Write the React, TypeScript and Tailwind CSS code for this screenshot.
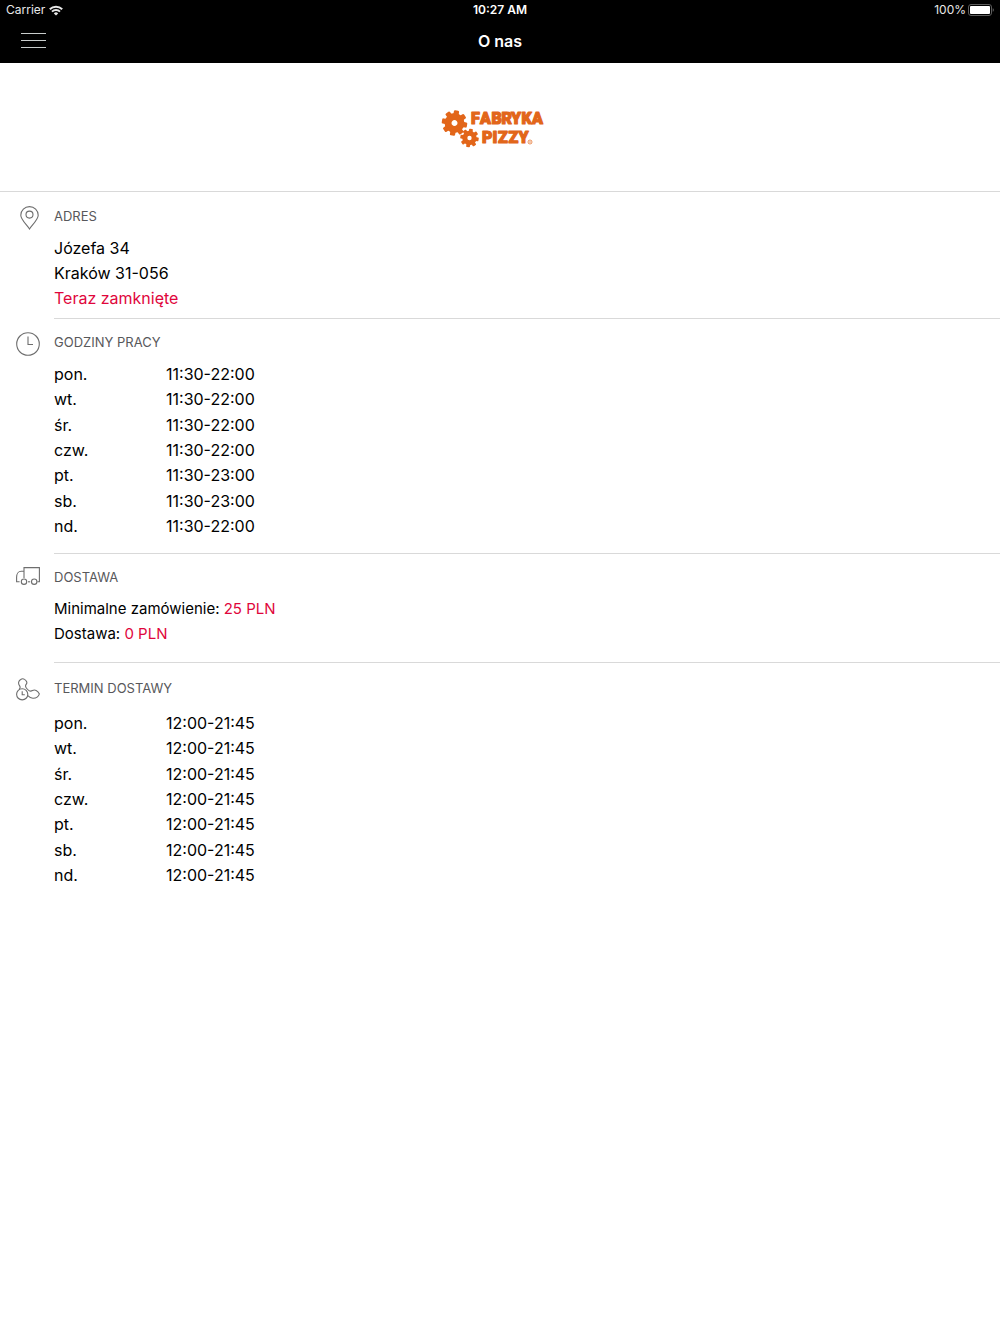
import type { ReactNode } from 'react'

interface DayHours {
  day: string
  hours: string
}

const openingHours: DayHours[] = [
  { day: 'pon.', hours: '11:30-22:00' },
  { day: 'wt.', hours: '11:30-22:00' },
  { day: 'śr.', hours: '11:30-22:00' },
  { day: 'czw.', hours: '11:30-22:00' },
  { day: 'pt.', hours: '11:30-23:00' },
  { day: 'sb.', hours: '11:30-23:00' },
  { day: 'nd.', hours: '11:30-22:00' }
]

const deliveryHours: DayHours[] = [
  { day: 'pon.', hours: '12:00-21:45' },
  { day: 'wt.', hours: '12:00-21:45' },
  { day: 'śr.', hours: '12:00-21:45' },
  { day: 'czw.', hours: '12:00-21:45' },
  { day: 'pt.', hours: '12:00-21:45' },
  { day: 'sb.', hours: '12:00-21:45' },
  { day: 'nd.', hours: '12:00-21:45' }
]

function WifiIcon() {
  return (
    <svg width="14" height="11" viewBox="0 0 14 11" fill="none" stroke="currentColor" strokeWidth="2">
      <path d="M0.8 4.2a8.8 8.8 0 0 1 12.4 0" />
      <path d="M3 6.6a5.7 5.7 0 0 1 8 0" />
      <path d="M7 10.6 4.8 8.4a3.1 3.1 0 0 1 4.4 0Z" fill="currentColor" stroke="none" />
    </svg>
  )
}

function BatteryIcon() {
  return (
    <svg width="26" height="12" viewBox="0 0 26 12" fill="none">
      <rect x="0.5" y="0.5" width="23" height="11" rx="2.5" stroke="#5c5c5c" />
      <rect x="2" y="2" width="20" height="8" rx="1" fill="#fff" />
      <path d="M24.7 4.2v3.6c.9-.4 1.2-1 1.2-1.8s-.3-1.4-1.2-1.8Z" fill="#5c5c5c" />
    </svg>
  )
}

function PinIcon() {
  return (
    <svg width="20" height="24" viewBox="0 0 20 24" fill="none" stroke="currentColor" strokeWidth="1.1">
      <path d="M9.500 23C7.500 19.500 0.800 13.700 0.800 9.200a8.700 8.600 0 0 1 17.400 0C18.200 13.700 11.500 19.500 9.500 23Z" />
      <circle cx="9.500" cy="8.600" r="3.500" />
    </svg>
  )
}

function ClockIcon() {
  return (
    <svg width="24" height="24" viewBox="0 0 24 24" fill="none" stroke="currentColor" strokeWidth="1.1">
      <circle cx="12" cy="12" r="11.300" />
      <path d="M12 4.500v8h5" />
    </svg>
  )
}

function TruckIcon() {
  return (
    <svg width="24" height="18" viewBox="0 0 24 18" fill="none" stroke="currentColor" strokeWidth="1.1">
      <path d="M8 11V0.600h15.400v14.200h-2" />
      <path d="M8 4.300H5.200C2.400 4.300 0.600 7 0.600 10.300v4.500h3" />
      <path d="M12 14.800h2.200" />
      <circle cx="8" cy="14.700" r="2.700" />
      <circle cx="18.200" cy="14.700" r="2.700" />
    </svg>
  )
}

function PhoneClockIcon() {
  return (
    <svg width="24" height="23" viewBox="0 0 24 23" fill="none" stroke="currentColor" strokeWidth="1.1">
      <circle cx="6.200" cy="16.300" r="5.600" />
      <path d="M6.200 13.200v3.600h2.600" />
      <path d="M3.200 11.300C4.300 10.200 4.400 8.900 3.500 7.600 1.800 5.200 2.600 2.900 4.700 1.500 6 .5 7.200.4 8.500 1.400 10.600 2.800 11.500 4.600 10.300 6.200 9.300 7.500 9.200 8.600 10.300 10c.9 1.100 1.700 1.900 2.700 2.600 1.200.9 2.300.7 3.500 0 2.300-1.300 5.200-.2 6.900 3.300-.9 2.700-3.500 4.400-6.500 4.300-2.100-.1-3.600-1-5.100-2.500" />
    </svg>
  )
}

function Gear({ teeth, size }: { teeth: number; size: number }) {
  const step = 360 / teeth
  return (
    <>
      <circle r={size * 0.54} fill="none" stroke="currentColor" strokeWidth={size * 0.58} />
      {Array.from({ length: teeth }, (_, i) => (
        <rect
          key={i}
          x={-size * 0.22}
          y={-size * 1.06}
          width={size * 0.44}
          height={size * 0.4}
          rx={size * 0.1}
          fill="currentColor"
          transform={`rotate(${i * step + 10})`}
        />
      ))}
    </>
  )
}

function Logo() {
  return (
    <svg
      width="104"
      height="42"
      viewBox="0 0 104 42"
      className="text-[#e2661a]"
      fontFamily="Roboto, sans-serif"
      fontWeight="900"
      fontSize="16"
      fill="currentColor"
      stroke="currentColor"
      strokeWidth="1.200"
      strokeLinejoin="round"
      role="img"
      aria-label="Fabryka Pizzy"
    >
      <g transform="translate(13.500 17)" stroke="none">
        <Gear teeth={8} size={12} />
      </g>
      <g transform="translate(28.500 32)" stroke="none">
        <Gear teeth={8} size={8.700} />
      </g>
      <text x="30 39 50.500 60.500 70 80.500 91" y="17.500">FABRYKA</text>
      <text x="41 51.500 57 67.500 77.500" y="36.500">PIZZY</text>
      <circle cx="89" cy="36" r="2" fill="none" strokeWidth="0.700" />
      <circle cx="89" cy="36" r="0.700" stroke="none" />
    </svg>
  )
}

interface SectionProps {
  icon: ReactNode
  title: string
  className: string
  bodyClassName: string
  children: ReactNode
}

function Section({ icon, title, className, bodyClassName, children }: SectionProps) {
  return (
    <section className={`flex ${className}`}>
      <div className="w-[54px] shrink-0 pl-4 text-[#6e6e6e]">{icon}</div>
      <div className={`flex flex-1 flex-col items-start ${bodyClassName}`}>
        <h2 className="text-[13px] leading-5 text-[#58585b]">{title}</h2>
        {children}
      </div>
    </section>
  )
}

function HoursTable({ rows }: { rows: DayHours[] }) {
  return (
    <table className="h-[178px]">
      <tbody>
        {rows.map(row => (
          <tr key={row.day}>
            <th scope="row" className="w-[112px] p-0 text-left font-normal">{row.day}</th>
            <td className="p-0">{row.hours}</td>
          </tr>
        ))}
      </tbody>
    </table>
  )
}

export default function App() {
  return (
    <div className="min-h-screen bg-white font-['Inter',sans-serif] text-[16px] leading-5 text-black">
      <header className="bg-black text-white">
        {/* Status bar */}
        <div className="grid h-5 grid-cols-3 items-center text-[12px] leading-5">
          <div className="flex items-center gap-1 pl-[6px] text-[#e8e8e8]">
            <span>Carrier</span>
            <WifiIcon />
          </div>
          <div className="text-center font-semibold">10:27 AM</div>
          <div className="flex items-center justify-end gap-[2px] pr-[6px] text-[#e8e8e8]">
            <span>100%</span>
            <BatteryIcon />
          </div>
        </div>

        {/* Navigation bar */}
        <div className="grid h-[43px] grid-cols-3 items-center pb-[2px]">
          <button type="button" aria-label="Menu" className="ml-[21px] flex w-[25px] flex-col gap-[6px]">
            <span className="h-px w-full bg-[#c8cccb]" />
            <span className="h-px w-full bg-[#c8cccb]" />
            <span className="h-px w-full bg-[#c8cccb]" />
          </button>
          <h1 className="text-center text-[16px] font-semibold">O nas</h1>
        </div>
      </header>

      <main>
        <div className="flex h-[129px] items-center justify-center border-b border-[#d9d9d9] pr-[14px]">
          <Logo />
        </div>

        <Section
          icon={<div className="pl-1"><PinIcon /></div>}
          title="ADRES"
          className="pt-[14px]"
          bodyClassName="gap-[9px] border-b border-[#d9d9d9] pb-[7px]"
        >
          <address className="grid min-h-[76px] items-center not-italic">
            <span>Józefa 34</span>
            <span>Kraków 31-056</span>
            <span className="text-[#e0063c]">Teraz zamknięte</span>
          </address>
        </Section>

        <Section
          icon={<ClockIcon />}
          title="GODZINY PRACY"
          className="pt-[13px]"
          bodyClassName="gap-[9px] border-b border-[#d9d9d9] pb-[14px]"
        >
          <HoursTable rows={openingHours} />
        </Section>

        <Section
          icon={<TruckIcon />}
          title="DOSTAWA"
          className="pt-[13px]"
          bodyClassName="gap-[9px] border-b border-[#d9d9d9] pb-[15px]"
        >
          <div className="grid min-h-[51px] items-center text-[15px]">
            <p>Minimalne zamówienie: <span className="text-[#e0063c]">25 PLN</span></p>
            <p>Dostawa: <span className="text-[#e0063c]">0 PLN</span></p>
          </div>
        </Section>

        <Section
          icon={<PhoneClockIcon />}
          title="TERMIN DOSTAWY"
          className="pt-[15px]"
          bodyClassName="gap-3"
        >
          <HoursTable rows={deliveryHours} />
        </Section>
      </main>
    </div>
  )
}
